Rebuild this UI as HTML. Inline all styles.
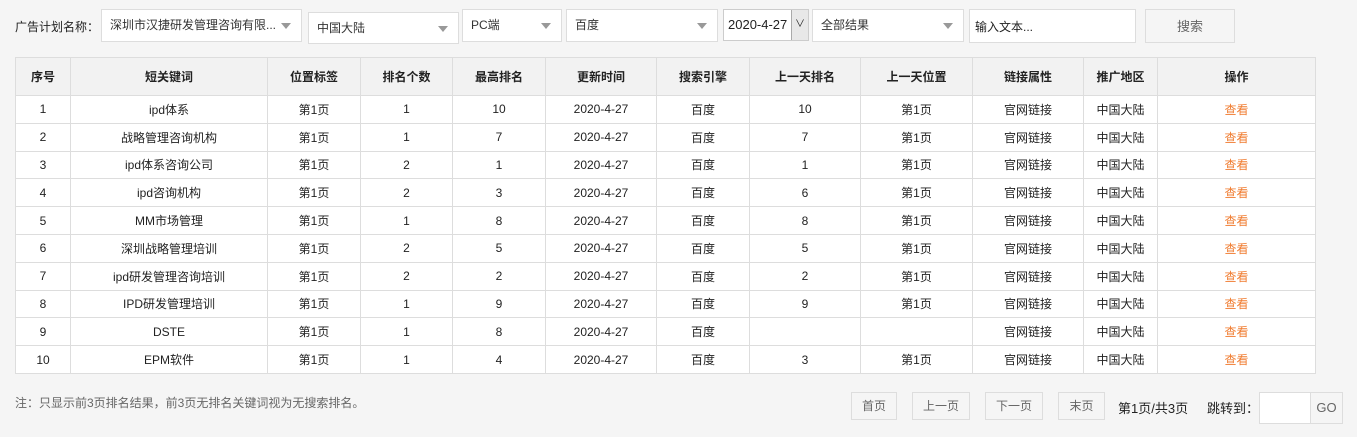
<!DOCTYPE html>
<html><head><meta charset="utf-8"><style>
body{margin:0;background:#f5f5f5;width:1357px;height:437px;overflow:hidden;font-family:"Liberation Sans","Noto Sans CJK SC",sans-serif;font-size:12px;color:#222;position:relative}
.a{position:absolute;box-sizing:border-box}
.sel{background:#fff;border:1px solid #ddd;padding-left:8px;line-height:31px;color:#333}
.sel:after{content:"";position:absolute;right:10px;top:13px;border:5px solid transparent;border-top:6px solid #999;border-bottom:0}
table{position:absolute;left:15px;top:57px;width:1301px;border-collapse:collapse;background:#fff;table-layout:fixed}
td,th{border:1px solid #ddd;text-align:center;height:26.8px;padding:0;font-size:12px}
th{background:#f2f2f2;height:37px;font-weight:bold}
.o{color:#f07c30}
.pb{border:1px solid #ddd;text-align:center;line-height:26px;color:#666;background:#f5f5f5}
</style></head><body>
<div class="a" style="left:15px;top:18px">广告计划名称：</div>
<div class="a sel" style="left:101px;top:9px;width:201px;height:33px">深圳市汉捷研发管理咨询有限...</div>
<div class="a sel" style="left:308px;top:12px;width:151px;height:32px">中国大陆</div>
<div class="a sel" style="left:462px;top:9px;width:100px;height:33px">PC端</div>
<div class="a sel" style="left:566px;top:9px;width:152px;height:33px">百度</div>
<div class="a" style="left:723px;top:9px;width:86px;height:32px;background:#fff;border:1px solid #ccc;line-height:30px;padding-left:4px;font-size:13px">2020-4-27<span style="position:absolute;right:0;top:0;width:16px;height:30px;background:#e8e8e8;border-left:1px solid #aaa;text-align:center;font-size:10px">∨</span></div>
<div class="a sel" style="left:812px;top:9px;width:152px;height:33px">全部结果</div>
<div class="a" style="left:969px;top:9px;width:167px;height:34px;background:#fff;border:1px solid #ddd;line-height:34px;padding-left:5px">输入文本...</div>
<div class="a" style="left:1145px;top:9px;width:90px;height:34px;border:1px solid #ddd;text-align:center;line-height:34px;color:#666;font-size:13px">搜索</div>
<table>
<colgroup><col style="width:55px"><col style="width:197px"><col style="width:93px"><col style="width:92px"><col style="width:93px"><col style="width:111px"><col style="width:93px"><col style="width:111px"><col style="width:112px"><col style="width:111px"><col style="width:74px"><col></colgroup>
<tr><th>序号</th><th>短关键词</th><th>位置标签</th><th>排名个数</th><th>最高排名</th><th>更新时间</th><th>搜索引擎</th><th>上一天排名</th><th>上一天位置</th><th>链接属性</th><th>推广地区</th><th>操作</th></tr>
<tr><td>1</td><td>ipd体系</td><td>第1页</td><td>1</td><td>10</td><td>2020-4-27</td><td>百度</td><td>10</td><td>第1页</td><td>官网链接</td><td>中国大陆</td><td class="o">查看</td></tr>
<tr><td>2</td><td>战略管理咨询机构</td><td>第1页</td><td>1</td><td>7</td><td>2020-4-27</td><td>百度</td><td>7</td><td>第1页</td><td>官网链接</td><td>中国大陆</td><td class="o">查看</td></tr>
<tr><td>3</td><td>ipd体系咨询公司</td><td>第1页</td><td>2</td><td>1</td><td>2020-4-27</td><td>百度</td><td>1</td><td>第1页</td><td>官网链接</td><td>中国大陆</td><td class="o">查看</td></tr>
<tr><td>4</td><td>ipd咨询机构</td><td>第1页</td><td>2</td><td>3</td><td>2020-4-27</td><td>百度</td><td>6</td><td>第1页</td><td>官网链接</td><td>中国大陆</td><td class="o">查看</td></tr>
<tr><td>5</td><td>MM市场管理</td><td>第1页</td><td>1</td><td>8</td><td>2020-4-27</td><td>百度</td><td>8</td><td>第1页</td><td>官网链接</td><td>中国大陆</td><td class="o">查看</td></tr>
<tr><td>6</td><td>深圳战略管理培训</td><td>第1页</td><td>2</td><td>5</td><td>2020-4-27</td><td>百度</td><td>5</td><td>第1页</td><td>官网链接</td><td>中国大陆</td><td class="o">查看</td></tr>
<tr><td>7</td><td>ipd研发管理咨询培训</td><td>第1页</td><td>2</td><td>2</td><td>2020-4-27</td><td>百度</td><td>2</td><td>第1页</td><td>官网链接</td><td>中国大陆</td><td class="o">查看</td></tr>
<tr><td>8</td><td>IPD研发管理培训</td><td>第1页</td><td>1</td><td>9</td><td>2020-4-27</td><td>百度</td><td>9</td><td>第1页</td><td>官网链接</td><td>中国大陆</td><td class="o">查看</td></tr>
<tr><td>9</td><td>DSTE</td><td>第1页</td><td>1</td><td>8</td><td>2020-4-27</td><td>百度</td><td></td><td></td><td>官网链接</td><td>中国大陆</td><td class="o">查看</td></tr>
<tr><td>10</td><td>EPM软件</td><td>第1页</td><td>1</td><td>4</td><td>2020-4-27</td><td>百度</td><td>3</td><td>第1页</td><td>官网链接</td><td>中国大陆</td><td class="o">查看</td></tr>
</table>
<div class="a" style="left:15px;top:394px;color:#666">注：只显示前3页排名结果，前3页无排名关键词视为无搜索排名。</div>
<div class="a pb" style="left:851px;top:392px;width:46px;height:28px">首页</div>
<div class="a pb" style="left:912px;top:392px;width:58px;height:28px">上一页</div>
<div class="a pb" style="left:985px;top:392px;width:58px;height:28px">下一页</div>
<div class="a pb" style="left:1058px;top:392px;width:47px;height:28px">末页</div>
<div class="a" style="left:1118px;top:398px;font-size:13px">第1页/共3页</div>
<div class="a" style="left:1207px;top:398px;font-size:13px">跳转到：</div>
<div class="a" style="left:1259px;top:392px;width:52px;height:32px;background:#fff;border:1px solid #ddd"></div>
<div class="a pb" style="left:1310px;top:392px;width:33px;height:32px;line-height:30px;font-size:13px">GO</div>
</body></html>
